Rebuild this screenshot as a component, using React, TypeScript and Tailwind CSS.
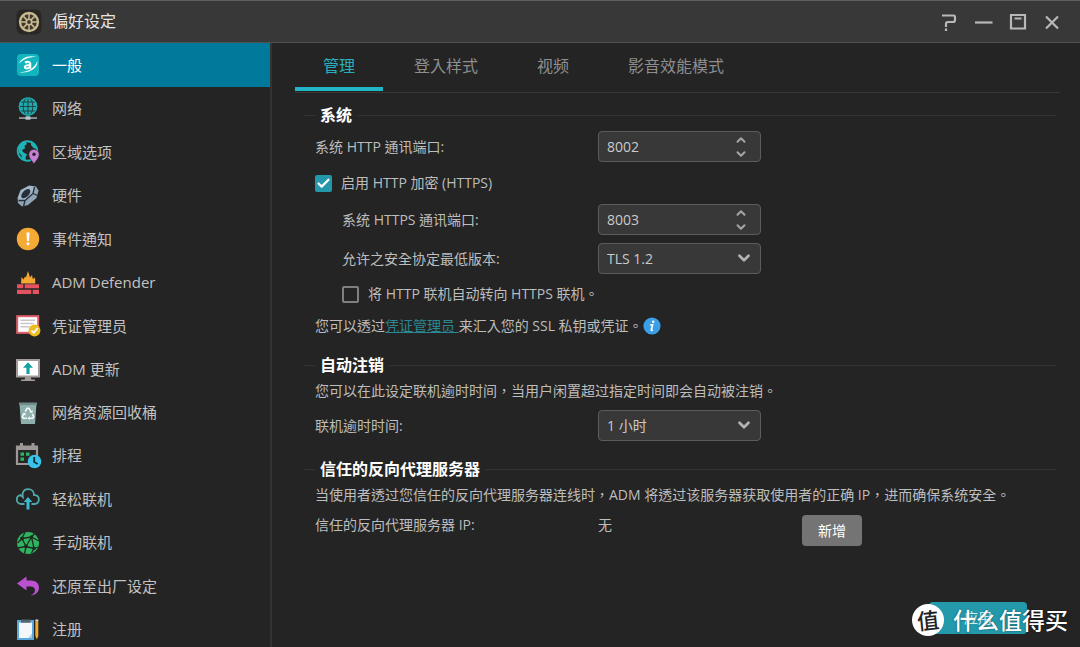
import { useState, type ReactNode } from "react";
import { Check, ChevronDown, ChevronUp } from "lucide-react";
import { cx } from "class-variance-authority";

function GearWheelIcon() {
  return (
    <svg width="26" height="26" viewBox="0 0 26 26" aria-hidden="true">
      <rect x="0.5" y="0.5" width="25" height="25" rx="6" fill="#292724" />
      <circle cx="13" cy="13" r="9" fill="#3d372e" stroke="#c9ba92" strokeWidth="2.3" />
      <path
        d="M13 5v16M5 13h16M7.400 7.400l11.200 11.200M18.600 7.400 7.400 18.600"
        stroke="#c9ba92"
        strokeWidth="1.500"
      />
      <circle cx="13" cy="13" r="3.600" fill="#c9ba92" />
      <circle cx="13" cy="13" r="1.900" fill="#3d372e" />
    </svg>
  );
}

function GeneralIcon() {
  return (
    <svg width="24" height="24" viewBox="0 0 24 24" aria-hidden="true">
      <rect x="1" y="1" width="22" height="22" rx="4" fill="#12b5bd" />
      <path d="M3 10.500C5 5 12.500 1.500 20.500 4 14.500 3.600 8 5.500 3 10.500Z" fill="#fff" />
      <path d="M21.300 8C22.500 14 14.500 20.800 3.500 19.300 11.500 19.300 18.500 15.500 21.300 8Z" fill="#fff" />
      <path
        d="M9 9.600c2-1.100 5.200-1 5.200 1.400v4.800M14.200 12.300c-2.800-.3-5.300 0-5.300 1.700 0 2 3.900 1.900 5.300-.3"
        fill="none"
        stroke="#fff"
        strokeWidth="2.100"
      />
    </svg>
  );
}

function NetworkIcon() {
  return (
    <svg width="24" height="24" viewBox="0 0 24 24" aria-hidden="true">
      <circle cx="12" cy="9.500" r="9.200" fill="#1fa9ad" />
      <g fill="none" stroke="#20393b" strokeWidth="0.900">
        <ellipse cx="12" cy="9.500" rx="4.800" ry="9.200" />
        <path d="M12 0v19M3 9.500h18M4.500 5h15M4.500 14h15" />
      </g>
      <circle cx="12" cy="9.500" r="8.700" fill="none" stroke="#1fa9ad" strokeWidth="1.300" />
      <path d="M10.500 18.500h3v2h-3z" fill="#1fa9ad" />
      <path d="M3 20.300h18v1.500H3z" fill="#9fb0ba" />
      <path d="M9.500 19.500h5v3.200h-5z" fill="#b9c6cd" />
    </svg>
  );
}

function RegionIcon() {
  return (
    <svg width="24" height="24" viewBox="0 0 24 24" aria-hidden="true">
      <circle cx="11.500" cy="11" r="9.800" fill="none" stroke="#1fb3b5" strokeWidth="1.900" />
      <path d="M2.500 7 6 3l3.500-1.500L11 4 8.500 6l.5 2.500-3 1.500 1 2 4 2.500-1.500 3 .5 3.500-4-1.500-.5-4-2.500-3Z" fill="#1fb3b5" />
      <path d="m15 2 4.500 3.500L20.500 9l-3-1-2.500-3Z" fill="#1fb3b5" />
      <path
        d="M18 9.300a5.200 5.200 0 0 1 5.200 5.200c0 3.500-3.200 6.200-5.200 9.500-2-3.300-5.200-6-5.200-9.500A5.200 5.200 0 0 1 18 9.300Z"
        fill="#c77fd6"
        stroke="#242424"
        strokeWidth="0.600"
      />
      <circle cx="18" cy="14.300" r="1.700" fill="#242424" />
    </svg>
  );
}

function HardwareIcon() {
  return (
    <svg width="24" height="24" viewBox="0 0 24 24" aria-hidden="true">
      <path d="m1.500 14 3-8 8.500-4.500L20 2.500l2.500 4L20.500 14 12 21l-6 1.500-4-3.500Z" fill="#8fa4b5" />
      <path d="m2 14 3-7.500L13 2l5 .5L16.500 9 9 16.500l-6 .5Z" fill="#a5b8c7" />
      <ellipse cx="9.800" cy="9.600" rx="5.700" ry="3.200" transform="rotate(-46 9.800 9.600)" fill="#26313b" />
      <path
        d="m2.500 16.500 6.500 0 8-7 1.500-6.500M9 16.500l-1.500 6M17 9.500l4.500 2"
        fill="none"
        stroke="#26313b"
        strokeWidth="1.300"
      />
    </svg>
  );
}

function NotificationIcon() {
  return (
    <svg width="24" height="24" viewBox="0 0 24 24" aria-hidden="true">
      <circle cx="12" cy="12" r="11.200" fill="#f6aa36" />
      <path d="M10.400 5.500h3.200l-.6 8.500h-2z" fill="#fff" />
      <circle cx="12" cy="16.700" r="1.500" fill="#fff" />
    </svg>
  );
}

function DefenderIcon() {
  return (
    <svg width="24" height="24" viewBox="0 0 24 24" aria-hidden="true">
      <path d="M5 12.500 5.500 6l2 2.500L9 5.500l1 1L12 0l2 6.500L16 4l.8 4L19 6.500l.3 6Z" fill="#f5a733" />
      <path d="M1 13.300h6.300v4H1zM8.700 13.300H23v4H8.700zM1 18.800h14.300v4.200H1zM16.700 18.800H23v4.200h-6.300z" fill="#e4525f" />
    </svg>
  );
}

function CertificateIcon() {
  return (
    <svg width="26" height="24" viewBox="0 0 26 24" aria-hidden="true">
      <rect x="2.200" y="2.200" width="21" height="16.600" fill="#fff" stroke="#e0606b" strokeWidth="2" />
      <path d="M5.500 6.200h14.500M5.500 9.500h13M5.500 12.800h9" stroke="#c9c4c8" strokeWidth="1.400" />
      <circle cx="19.500" cy="16.500" r="5.900" fill="#efbc22" />
      <path d="m16.500 16.500 2.200 2.300 4-4.600" fill="none" stroke="#fff" strokeWidth="1.800" />
    </svg>
  );
}

function UpdateIcon() {
  return (
    <svg width="24" height="24" viewBox="0 0 24 24" aria-hidden="true">
      <rect x="1" y="2" width="22" height="16.500" fill="#fff" stroke="#a39c9a" strokeWidth="2" />
      <path d="M9.500 19h5l1 2.500H19V23H5v-1.500h3.500z" fill="#a39c9a" />
      <path d="m12 4.300 5 5.500h-3.400V16h-3.200V9.800H7Z" fill="#14a3a0" />
    </svg>
  );
}

function RecycleIcon() {
  return (
    <svg width="24" height="24" viewBox="0 0 24 24" aria-hidden="true">
      <path d="M3.500 2.500h17L19 23H5Z" fill="#8db0ac" />
      <path d="M3 1.500h18V4H3z" fill="#6f8d8b" />
      <g fill="none" stroke="#f3f8f7" strokeWidth="1.600">
        <path d="m9.200 10.500 2-3.200h1.700l2.100 3.500" />
        <path d="m16.300 13 1.400 2.500-1 1.700h-3.500" />
        <path d="M11 17.200H7.300l-1-1.700 1.900-3.200" />
      </g>
      <path d="m13.400 11.500 3 .6.400-3zM13.700 15.200v4L11.500 17.200zM6.300 12.700l3-1.200.5 3.200z" fill="#f3f8f7" />
    </svg>
  );
}

function ScheduleIcon() {
  return (
    <svg width="28" height="28" viewBox="0 0 28 28" aria-hidden="true">
      <path d="M3 5h20v17H3z" fill="#262626" stroke="#9d9896" strokeWidth="2.200" />
      <path d="M2 3.500h22V8H2zM6 1h3v4H6zM17.500 1h3v4h-3z" fill="#9d9896" />
      <path d="M6.500 10.500h3.500v3.300H6.500zM12 10.500h3.500v3.300H12zM6.500 15.500h3.500v3.300H6.500z" fill="#2db463" />
      <circle cx="20.500" cy="19.500" r="6.800" fill="#38c4ea" />
      <path d="M20.200 15v5l3.500 2" fill="none" stroke="#15323c" strokeWidth="1.900" />
    </svg>
  );
}

function EasyConnectIcon() {
  return (
    <svg width="26" height="24" viewBox="0 0 26 24" aria-hidden="true">
      <path
        d="M9.500 17H6a4.500 4.500 0 0 1-.6-8.900C6 9 7 9.300 7.800 10c-1-5 1.200-7.900 5.200-7.900 3.500 0 6 2.400 6 6l1.500.1a4.500 4.500 0 0 1-.5 8.800h-3.500"
        fill="none"
        stroke="#4fa9a8"
        strokeWidth="1.800"
      />
      <path d="m13 10 4.300 5h-2.800v7.500h-3V15H8.700Z" fill="#38bcd0" />
    </svg>
  );
}

function ManualConnectIcon() {
  return (
    <svg width="24" height="24" viewBox="0 0 24 24" aria-hidden="true">
      <circle cx="12" cy="12" r="11" fill="#2fb45f" />
      <g fill="none" stroke="#1d2b21" strokeWidth="1.300">
        <path d="M6 7.500 9 1M6 7.500 15.500 6M15.500 6l3.500-4M15.500 6 23 10M6 7.500 1.500 12M6 7.500l4 8M15.500 6 10 15.500M10 15.500 1.500 17M10 15.500l8 2M10 15.500 8.500 23M15.500 6 18 17.500M18 17.500l4-1.500M18 17.500 15.500 22" />
      </g>
      <g fill="#1d2b21">
        <circle cx="6" cy="7.500" r="1.900" />
        <circle cx="15.500" cy="6" r="1.700" />
        <circle cx="10" cy="15.500" r="2" />
        <circle cx="18" cy="17.500" r="1.800" />
      </g>
    </svg>
  );
}

function RestoreIcon() {
  return (
    <svg width="24" height="24" viewBox="0 0 24 24" aria-hidden="true">
      <path
        d="M1 9.500 10.500 2.500v4H15c5 0 8 3 8 7.200 0 4.100-3.200 7.300-8.500 7.800 2.800-1.300 4.500-2.800 4.500-5.200 0-2.300-1.800-3.800-4.500-3.800h-4v4Z"
        fill="#bb50d0"
      />
    </svg>
  );
}

function RegisterIcon() {
  return (
    <svg width="24" height="24" viewBox="0 0 24 24" aria-hidden="true">
      <rect x="1" y="2" width="17" height="20" fill="#5aa9da" />
      <path d="M3 4.500h13V16l-3.500 4H3z" fill="#f4f7fa" />
      <path d="M16 16v4h-3.500z" fill="#b8cad7" />
      <path d="M5 1.500h9.500v3.200H5z" fill="#56646e" />
      <path d="M19.300 3.500h3V18l-1.400 3.500L19.300 18z" fill="#f0a92e" />
      <path d="M19.300 1.500h3v2h-3z" fill="#e0dbd2" />
    </svg>
  );
}

const navItems: { label: string; icon: ReactNode }[] = [
  { label: "一般", icon: <GeneralIcon /> },
  { label: "网络", icon: <NetworkIcon /> },
  { label: "区域选项", icon: <RegionIcon /> },
  { label: "硬件", icon: <HardwareIcon /> },
  { label: "事件通知", icon: <NotificationIcon /> },
  { label: "ADM Defender", icon: <DefenderIcon /> },
  { label: "凭证管理员", icon: <CertificateIcon /> },
  { label: "ADM 更新", icon: <UpdateIcon /> },
  { label: "网络资源回收桶", icon: <RecycleIcon /> },
  { label: "排程", icon: <ScheduleIcon /> },
  { label: "轻松联机", icon: <EasyConnectIcon /> },
  { label: "手动联机", icon: <ManualConnectIcon /> },
  { label: "还原至出厂设定", icon: <RestoreIcon /> },
  { label: "注册", icon: <RegisterIcon /> },
];

const tabs = ["管理", "登入样式", "视频", "影音效能模式"];

const windowButtons = [
  { label: "说明", path: "M4 5.500h11.500q1.500 0 1.500 1.500v3q0 2-2 2H10q-2 0-2 2v3M8 18.500v2.500" },
  { label: "最小化", path: "M3 12.500h17.500" },
  { label: "最大化", path: "M5 5h14v13.500H5zM8.500 8.500h7" },
  { label: "关闭", path: "m6 6.500 12 12M18 6.500l-12 12" },
];

function TitleBar() {
  return (
    <header className="flex h-[43px] shrink-0 items-center justify-between border-t border-b border-t-[#606060] border-b-[#505252] bg-[#393838] px-4">
      <div className="flex items-center gap-2.5 text-base text-[#e6e6e6]">
        <GearWheelIcon />
        <h1 className="pb-0.5">偏好设定</h1>
      </div>
      <div className="flex gap-2.5">
        {windowButtons.map((b) => (
          <button key={b.label} type="button" aria-label={b.label} className="text-[#b9b7b7] hover:text-white">
            <svg width="24" height="24" viewBox="0 0 24 24" fill="none" stroke="currentColor" strokeWidth="2.200" aria-hidden="true">
              <path d={b.path} />
            </svg>
          </button>
        ))}
      </div>
    </header>
  );
}

function Sidebar() {
  const [active, setActive] = useState("一般");

  return (
    <nav className="w-1/4 shrink-0 overflow-hidden">
      <ul>
        {navItems.map((item) => (
          <li key={item.label} className="h-[43px] nth-[2n+1]:h-11 nth-[9]:h-[43px]">
            <button
              type="button"
              onClick={() => setActive(item.label)}
              className={cx(
                "flex h-full w-full items-center gap-3 pl-4 text-left text-[15px]",
                active === item.label ? "bg-[#00799b] text-white" : "text-[#c2c2c2]"
              )}
            >
              <span className="flex w-6 justify-center overflow-visible [&>svg]:shrink-0">{item.icon}</span>
              {item.label}
            </button>
          </li>
        ))}
      </ul>
    </nav>
  );
}

function SectionTitle({ children }: { children: ReactNode }) {
  return (
    <div className="flex h-6 items-center">
      <span className="h-px w-3 bg-[#323232]" />
      <h2 className="px-[5px] text-base font-bold text-white">{children}</h2>
      <span className="h-px flex-1 bg-[#323232]" />
    </div>
  );
}

interface PortFieldProps {
  id: string;
  value: number;
  onChange: (value: number) => void;
}

function PortField({ id, value, onChange }: PortFieldProps) {
  return (
    <div className="flex h-[31px] w-[163px] items-center rounded border border-[#5c5c5c] bg-[#383838] pr-3">
      <input
        id={id}
        type="text"
        value={value}
        onChange={(e) => onChange(Number(e.target.value) || 0)}
        className="h-full min-w-0 flex-1 bg-transparent pl-2 text-sm text-[#cacaca] outline-none"
      />
      <div className="flex flex-col text-[#a4a4a4]">
        <button type="button" aria-label="增加" onClick={() => onChange(value + 1)}>
          <ChevronUp size={14} strokeWidth={3.5} />
        </button>
        <button type="button" aria-label="减少" onClick={() => onChange(value - 1)}>
          <ChevronDown size={14} strokeWidth={3.5} />
        </button>
      </div>
    </div>
  );
}

function SelectField({ id, options }: { id: string; options: string[] }) {
  return (
    <div className="relative w-[163px]">
      <select
        id={id}
        className="h-[31px] w-full appearance-none rounded border border-[#5c5c5c] bg-[#383838] pl-2 text-sm text-[#cacaca] outline-none"
      >
        {options.map((o) => (
          <option key={o}>{o}</option>
        ))}
      </select>
      <ChevronDown
        size={18}
        strokeWidth={3.5}
        className="pointer-events-none absolute top-1.5 right-2 text-[#b4b4b4]"
      />
    </div>
  );
}

interface CheckFieldProps {
  checked: boolean;
  onChange: (checked: boolean) => void;
  children: ReactNode;
}

function CheckField({ checked, onChange, children }: CheckFieldProps) {
  return (
    <label className="flex h-5 items-center gap-[9px]">
      <span className="relative flex h-[17px] w-[17px]">
        <input
          type="checkbox"
          checked={checked}
          onChange={(e) => onChange(e.target.checked)}
          className="h-full w-full appearance-none rounded-xs border-2 border-[#808080] checked:border-[#2597aa] checked:bg-[#2597aa]"
        />
        {checked && (
          <Check size={15} strokeWidth={3.5} className="pointer-events-none absolute top-px left-px text-white" />
        )}
      </span>
      <span>{children}</span>
    </label>
  );
}

function Row({ children, className }: { children: ReactNode; className?: string }) {
  return <div className={cx("grid grid-cols-[283px_1fr] items-center", className)}>{children}</div>;
}

function SystemSection() {
  const [http, setHttp] = useState(8002);
  const [https, setHttps] = useState(8003);
  const [secure, setSecure] = useState(true);
  const [redirect, setRedirect] = useState(false);

  return (
    <section>
      <SectionTitle>系统</SectionTitle>
      <div className="pt-1 pl-3">
        <Row>
          <label htmlFor="http-port">系统 HTTP 通讯端口:</label>
          <PortField id="http-port" value={http} onChange={setHttp} />
        </Row>
        <div className="my-[11px]">
          <CheckField checked={secure} onChange={setSecure}>
            启用 HTTP 加密 (HTTPS)
          </CheckField>
        </div>
        <Row>
          <label htmlFor="https-port" className="pl-[27px]">
            系统 HTTPS 通讯端口:
          </label>
          <PortField id="https-port" value={https} onChange={setHttps} />
        </Row>
        <Row className="mt-2">
          <label htmlFor="tls" className="pl-[27px]">
            允许之安全协定最低版本:
          </label>
          <SelectField id="tls" options={["TLS 1.2", "TLS 1.3"]} />
        </Row>
        <div className="mt-2.5 pl-[27px]">
          <CheckField checked={redirect} onChange={setRedirect}>
            将 HTTP 联机自动转向 HTTPS 联机。
          </CheckField>
        </div>
        <p className="mt-3 flex h-5 items-center whitespace-pre">
          您可以透过
          <a href="#certificates" className="text-[#2b8793] underline">
            {"凭证管理员 "}
          </a>
          来汇入您的 SSL 私钥或凭证。
          <svg width="18" height="18" viewBox="0 0 18 18" aria-hidden="true">
            <circle cx="9" cy="9" r="8.600" fill="#3b9fe8" />
            <circle cx="10.200" cy="4.700" r="1.300" fill="#fff" />
            <path d="M7.300 7.900h2.300l-1.300 5c-.1.700.6.600 1.500-.1" fill="none" stroke="#fff" strokeWidth="1.700" />
          </svg>
        </p>
      </div>
    </section>
  );
}

function LogoutSection() {
  return (
    <section className="pt-[17px]">
      <SectionTitle>自动注销</SectionTitle>
      <div className="pt-1 pl-3">
        <p>您可以在此设定联机逾时时间，当用户闲置超过指定时间即会自动被注销。</p>
        <Row className="mt-[9px]">
          <label htmlFor="timeout">联机逾时时间:</label>
          <SelectField id="timeout" options={["1 小时", "2 小时"]} />
        </Row>
      </div>
    </section>
  );
}

function ProxySection() {
  return (
    <section className="pt-4">
      <SectionTitle>信任的反向代理服务器</SectionTitle>
      <div className="pt-1 pl-3">
        <p>当使用者透过您信任的反向代理服务器连线时，ADM 将透过该服务器获取使用者的正确 IP，进而确保系统安全。</p>
        <div className="mt-2.5 grid grid-cols-[283px_204px_auto] items-start">
          <span>信任的反向代理服务器 IP:</span>
          <span>无</span>
          <button type="button" className="h-[31px] w-[60px] rounded bg-[#747474] text-sm text-white">
            新增
          </button>
        </div>
      </div>
    </section>
  );
}

function Watermark() {
  return (
    <div className="pointer-events-none absolute right-3 bottom-[11px] flex items-center gap-[9px] text-white">
      <span className="flex h-8 w-8 items-center justify-center rounded-full bg-white">
        <span className="-rotate-6 text-[22px] leading-none font-medium text-[#222]">值</span>
      </span>
      <span className="text-[23px] leading-8 font-medium [text-shadow:0_0_2px_#0008]">什么值得买</span>
    </div>
  );
}

export default function App() {
  const [tab, setTab] = useState("管理");

  return (
    <div className="relative flex h-screen flex-col overflow-hidden bg-[#242424] font-['Open_Sans','Noto_Sans_CJK_TC',sans-serif]">
      <TitleBar />
      <div className="flex min-h-0 flex-1">
        <Sidebar />
        <main className="flex min-w-0 flex-1 flex-col border-l-2 border-[#333]">
          <div role="tablist" className="mr-5 ml-[23px] flex gap-[3px] border-b border-[#383838] pb-px">
            {tabs.map((t) => (
              <button
                key={t}
                type="button"
                role="tab"
                aria-selected={tab === t}
                onClick={() => setTab(t)}
                className={cx(
                  "h-12 border-b-4 px-7 pt-0.5 text-base",
                  tab === t ? "border-[#22b5c6] text-[#2aaebd]" : "border-transparent text-[#8e8e8e]"
                )}
              >
                {t}
              </button>
            ))}
          </div>
          <div className="mr-6 ml-[31px] flex-1 pt-2.5 text-sm leading-5 text-[#bdbdbd]">
            <SystemSection />
            <LogoutSection />
            <ProxySection />
          </div>
          <footer className="flex justify-end pr-[53px] pb-[13px]">
            <button type="button" className="h-8 w-[98px] rounded bg-[#2399ab] text-sm text-[#d3edf1]">
              应用
            </button>
          </footer>
        </main>
      </div>
      <Watermark />
    </div>
  );
}
